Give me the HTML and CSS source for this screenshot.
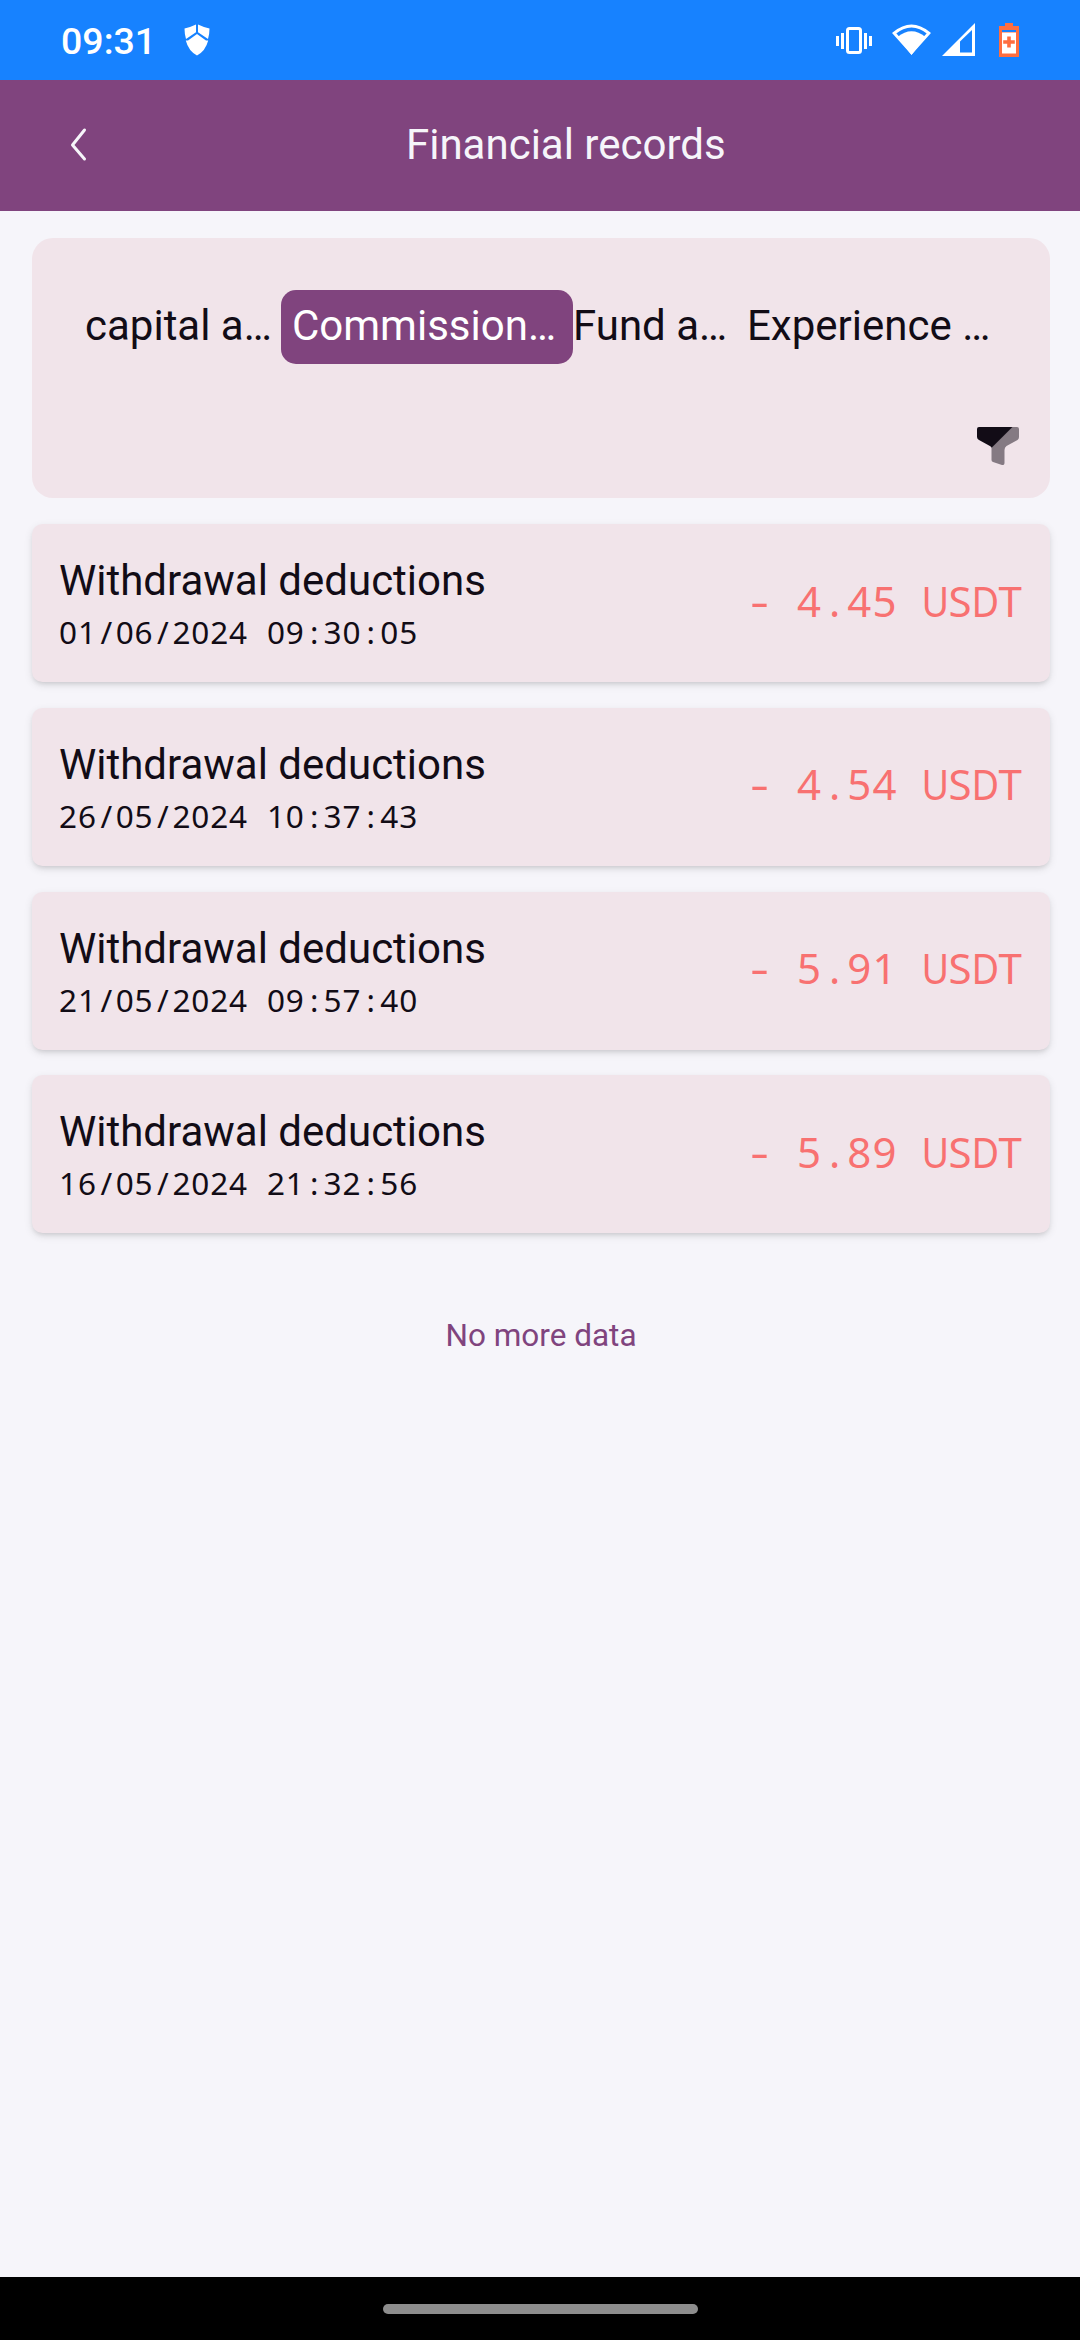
FILE: index.html
```
<!DOCTYPE html>
<html lang="en">
<head>
<meta charset="utf-8">
<title>Financial records</title>
<link rel="stylesheet" href="styles.css">
</head>
<body>
<div class="status">
  <span class="clock">09:31</span>
  <svg class="shield" width="26" height="32" viewBox="0 0 26 32" fill="#fff"><path d="M.5 4.5Q6.5 3.200 12 .5V8.300L2 15Q.5 10 .5 4.500ZM25.500 4.500Q19.500 3.200 14 .5V8.300L24 15Q25.500 10 25.500 4.500ZM1.800 16.500H4L13 10L22 16.500H24.200Q21.500 27 13 31.500Q4.500 27 1.800 16.500Z"/></svg>
  <svg class="system" width="184" height="36" viewBox="0 0 184 36">
    <g fill="none" stroke="#fff" stroke-width="3"><rect x="11.500" y="5.500" width="13" height="24" rx="2"/><path d="M1.500 13v10M6.500 10v16M29.500 10v16M34.500 13v10"/></g>
    <path fill="none" stroke="#fff" stroke-width="3" stroke-linejoin="miter" d="M75.500 29.500L58.200 10.200Q75.500-4.200 92.800 10.200Z"/>
    <path fill="#fff" d="M75.500 32L61.500 14Q75.500 2.500 89.500 14Z"/>
    <path fill="#fff" fill-rule="evenodd" d="M106 33L139 0V33ZM124 18.500V29.500H136V7Z"/>
    <path fill="#ff6e40" d="M169 0h8v3h6v31h-20V3h6z"/><path fill="#fff" d="M166 9.500h14v21h-14z"/><path fill="#1782ff" d="M166 7h14v2h-14z"/>
    <path fill="#ff6e40" d="M171.200 13.500h3.600v3.700h4v3.600h-4v3.700h-3.600v-3.700h-4v-3.600h4z"/>
  </svg>
</div>
<header class="header">
  <svg class="back" width="20" height="36" viewBox="0 0 20 36"><path d="M16.500 3L4.500 18L16.500 32" fill="none" stroke="#f6f5fa" stroke-width="3" stroke-linecap="round" stroke-linejoin="round"/></svg>
  <h1 class="heading">Financial records</h1>
</header>
<main class="content">
  <section class="filters">
    <nav class="tabs">
      <span class="tab tab-capital">capital a…</span>
      <span class="tab tab-active">Commission…</span>
      <span class="tab tab-fund">Fund a…</span>
      <span class="tab">Experience …</span>
    </nav>
    <svg class="funnel" width="42" height="38" viewBox="0 0 42 38"><path fill="#857a83" d="M35 0H40Q42 0 42 2V10Q42 12 40.500 13L29.500 19Q27.500 20.500 27.500 23V36Q27.500 38.500 25 38L16 35Q14.500 34.500 14.500 33V20.500Z"/><path fill="#120c16" d="M2 0H35.500L14.700 20.700Q14 19.500 12 18.500L2 13Q0 12 0 10V2Q0 0 2 0Z"/></svg>
  </section>
  <section class="records">
    <article class="record">
      <div><h2 class="name">Withdrawal deductions</h2>
      <p class="date mono">01<i class="slash">/</i>06<i class="slash">/</i>2024 09<i class="dot">:</i>30<i class="dot">:</i>05</p></div>
      <p class="amount mono"><i class="minus">-</i> 4<i class="dot">.</i>45 <i class="wide">U</i>S<i class="wide">D</i>T</p>
    </article>
    <article class="record">
      <div><h2 class="name">Withdrawal deductions</h2>
      <p class="date mono">26<i class="slash">/</i>05<i class="slash">/</i>2024 10<i class="dot">:</i>37<i class="dot">:</i>43</p></div>
      <p class="amount mono"><i class="minus">-</i> 4<i class="dot">.</i>54 <i class="wide">U</i>S<i class="wide">D</i>T</p>
    </article>
    <article class="record">
      <div><h2 class="name">Withdrawal deductions</h2>
      <p class="date mono">21<i class="slash">/</i>05<i class="slash">/</i>2024 09<i class="dot">:</i>57<i class="dot">:</i>40</p></div>
      <p class="amount mono"><i class="minus">-</i> 5<i class="dot">.</i>91 <i class="wide">U</i>S<i class="wide">D</i>T</p>
    </article>
    <article class="record">
      <div><h2 class="name">Withdrawal deductions</h2>
      <p class="date mono">16<i class="slash">/</i>05<i class="slash">/</i>2024 21<i class="dot">:</i>32<i class="dot">:</i>56</p></div>
      <p class="amount mono"><i class="minus">-</i> 5<i class="dot">.</i>89 <i class="wide">U</i>S<i class="wide">D</i>T</p>
    </article>
  </section>
  <p class="end">No more data</p>
</main>
<footer class="navbar"><div class="handle"></div></footer>
</body>
</html>
```
FILE: styles.css
```
* { box-sizing: border-box; }
body {
  margin: 0;
  height: 2340px;
  display: flex;
  flex-direction: column;
  background: #f6f5fa;
  color: #120c16;
  font-family: Roboto, sans-serif;
  font-size: 42px;
}
h1, h2, p { margin: 0; font-size: inherit; font-weight: 400; }
.status {
  height: 80px;
  flex: none;
  display: flex;
  align-items: flex-start;
  padding: 0 56px 0 61px;
  background: #1782ff;
  color: #fff;
}
.clock { width: 123px; padding-top: 19px; font-size: 37.500px; line-height: 44px; font-weight: 500; }
.shield { margin-top: 24px; }
.system { margin: 23px 4px 0 auto; }
.header {
  height: 131px;
  flex: none;
  display: flex;
  align-items: center;
  padding-left: 68px;
  background: #80447e;
  color: #f6f5fa;
}
.back { margin-top: -1px; }
.heading { margin: -2px 0 0 318px; line-height: 50px; white-space: nowrap; }
.content { flex: 1; padding: 27px 30px 0 32px; }
.filters {
  height: 260px;
  display: flex;
  flex-direction: column;
  justify-content: space-between;
  padding: 52px 31px 33px 53px;
  border-radius: 21px;
  background: #f1e4ea;
}
.tabs { display: flex; height: 74px; line-height: 72px; white-space: nowrap; }
.tab-capital { width: 196px; }
.tab-active { width: 292px; padding-left: 11px; border-radius: 15px; background: #80447e; color: #fff; }
.tab-fund { width: 174px; }
.funnel { align-self: flex-end; }
.records { display: grid; gap: 25.700px; margin-top: 26.300px; }
.record {
  height: 158px;
  display: flex;
  align-items: center;
  justify-content: space-between;
  padding: 0 27px;
  border-radius: 10.500px;
  background: #f1e4ea;
  box-shadow: 0 3px 8px rgba(0, 0, 0, .1), 0 3px 5px -2px rgba(0, 0, 0, .12);
}
.name { line-height: 50px; }
.mono {
  font-family: "Noto Sans", sans-serif;
  letter-spacing: .028em;
  word-spacing: .312em;
  white-space: nowrap;
}
.mono i { font-style: normal; letter-spacing: 0; }
.date { margin-top: 7px; font-size: 31.500px; line-height: 37px; }
.amount { margin-top: -5px; color: #f87171; line-height: 50px; }
.slash { padding: 0 .114em; }
.dot { padding: 0 .166em; }
.mono .minus { display: inline-block; width: .6em; text-align: center; transform: scaleX(1.4); }
.wide { display: inline-block; margin: 0 -.06em; transform: scaleX(.9); }
.end { margin-top: 84px; text-align: center; font-size: 31.500px; line-height: 38px; color: #80447e; }
.navbar { height: 63px; flex: none; display: flex; justify-content: center; padding-top: 27px; background: #000; }
.handle { width: 315px; height: 10px; border-radius: 5px; background: #8d8d8d; }
```
